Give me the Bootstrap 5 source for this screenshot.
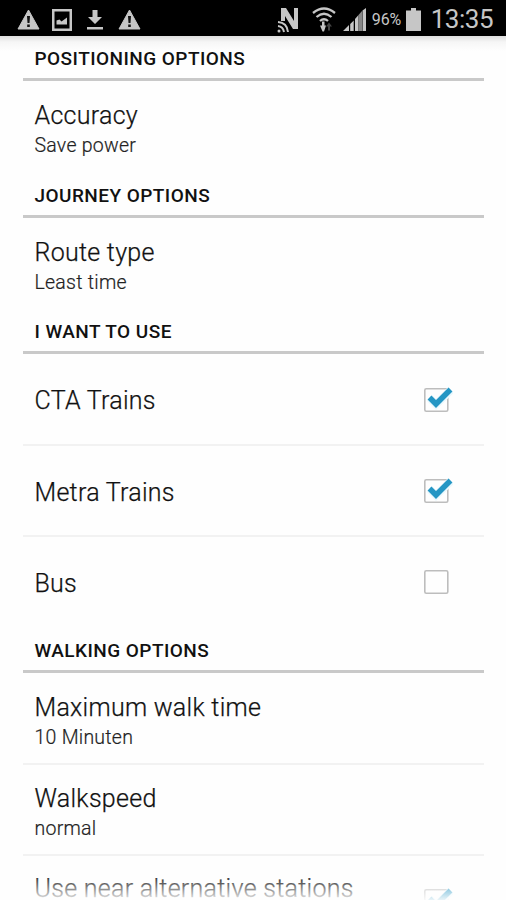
<!DOCTYPE html>
<html lang="en">
<head>
<meta charset="utf-8">
<meta name="viewport" content="width=device-width, initial-scale=1">
<title>Options</title>
<link href="https://cdn.jsdelivr.net/npm/bootstrap@5.3.0/dist/css/bootstrap.min.css" rel="stylesheet">
<style>
body { font-family: Roboto, sans-serif; background: #fefefe; color: #111; height: 900px; }
.screen { height: 900px; }
.statusbar { height: 36px; background: #000; color: #c6c6c6; padding: 3px 13px 0 17px; }
.statusbar svg { display: block; fill: #c6c6c6; }
.left-icons { gap: 12px; }
.left-icons svg:nth-child(n+3) { margin-left: 2px; }
.nfc-icon { margin-right: 13px; }
.signal-icon { margin-left: 7px; }
.battery-text { font-size: 16px; line-height: 33px; margin-left: 6px; width: 34px; letter-spacing: -.1px; }
.clock { font-size: 26px; line-height: 35px; margin-left: 10px; letter-spacing: -.5px; }
.options { height: 864px; padding: 0 22px 0 23px; background: linear-gradient(#dedede 0, #f6f6f6 6px, #fefefe 15px); }
.group-title { height: 46px; border-bottom: 3px solid #c9c9c9; padding: 11px 11.5px 0; font-size: 19px; line-height: 26px; font-weight: 500; letter-spacing: .45px; margin: 0; }
.group-title.first { height: 45px; padding-top: 10px; }
.option { height: 91px; padding: 0 31px 0 11.5px; }
.option + .option { border-top: 2px solid #f2f2f2; margin-top: -1px; height: 92px; }
.group-title + .option { height: 90.7px; }
.option-pair { padding-top: 6px; }
.option-name { font-size: 25px; line-height: 30px; font-weight: 300; letter-spacing: .28px; -webkit-text-stroke: .25px currentColor; }
.option-value { font-size: 19.5px; line-height: 24px; font-weight: 300; letter-spacing: .25px; margin-top: 3px; color: #222; -webkit-text-stroke: .2px currentColor; }
.option-name.single { padding-top: 3px; }
.tick-box { display: block; width: 30px; height: 30px; overflow: visible; }
.option + .last-option { padding-top: 18px; }
.last-option .tick-box { margin-top: 12px; }
.bottom-fade { height: 26px; background: linear-gradient(rgba(254,254,254,0), rgba(254,254,254,.9)); }
</style>
</head>
<body class="overflow-hidden">
<svg class="d-none">
  <symbol id="box" viewBox="0 0 30 30"><rect x="1.8" y="3.8" width="23" height="22.5" rx="1.5" fill="#fefefe" stroke="#bdbdbd" stroke-width="1.6"/></symbol>
  <symbol id="ticked" viewBox="0 0 30 30"><use href="#box"/><path d="M6.5 13l6.500 6.500L28 5" fill="none" stroke="#eaf8fd" stroke-width="8"/><path d="M6.500 12.500l6.500 6.500L27.500 4.500" fill="none" stroke="#2496c4" stroke-width="5.500"/></symbol>
  <symbol id="warning" viewBox="0 0 23 21"><path d="M11.5 1L22 20H1z" stroke="#c6c6c6" stroke-linejoin="round"/><path d="M10 7h3l-.5 7h-2zM10.2 15.5h2.6V18h-2.6z" fill="#111"/></symbol>
</svg>
<main class="screen position-relative overflow-hidden">
  <header class="statusbar d-flex align-items-center justify-content-between">
    <div class="left-icons d-flex align-items-center">
      <svg width="23" height="21"><use href="#warning"/></svg>
      <svg width="20" height="22" viewBox="0 0 20 22"><path fill-rule="evenodd" d="M0 0h20v22H0zM2.5 2.5v17h15v-17zM4.5 15.5v-4l3-1 2 2 5.500-4v7z"/></svg>
      <svg width="18" height="21" viewBox="0 0 18 21"><path d="M6.500 1h5v7H16l-7 7-7-7h4.500zM1 18h16v2.500H1z"/></svg>
      <svg width="23" height="21"><use href="#warning"/></svg>
    </div>
    <div class="d-flex align-items-center">
      <svg class="nfc-icon" width="22" height="26" viewBox="0 0 22 26"><path d="M4 1h5l8 13V1h4v21h-5L8 9v5H4z"/><g fill="none" stroke="#c6c6c6" stroke-width="2"><path d="M1 15q9 .5 10 10M1 19q5 .5 6 6"/></g><circle cx="2" cy="24" r="1.500"/></svg>
      <svg width="24" height="26" viewBox="0 0 24 26"><g fill="none" stroke="#c6c6c6" stroke-width="2.300"><path d="M1 6q11-9 22 0M4.500 10q7.500-6.500 15 0M8 14q4-3.500 8 0"/></g><path d="M10 14.500v4H8l2.500 6h1.500l2-6h-1.500v-4z"/><path d="M16 23.500v-4h-2l3-4 3 4h-2v4z" fill="#444"/></svg>
      <svg class="signal-icon" width="23" height="25" viewBox="0 0 23 25"><path d="M0 24l6-6v6zM7.200 24v-7l3.500-3.500V24zM12 24V12l3.500-4v16z"/><path d="M15.500 24V8L19 4v20z" fill="#888"/><path d="M19.500 24V3.500L23 1v23z"/></svg>
      <div class="battery-text">96%</div>
      <svg width="15" height="23" viewBox="0 0 15 23"><path d="M0 2.500h5V0h5v2.500h5V23H0z"/></svg>
      <div class="clock">13:35</div>
    </div>
  </header>

  <div class="options">
    <h2 class="group-title first">POSITIONING OPTIONS</h2>
    <div class="option option-pair d-flex flex-column justify-content-center"><div class="option-name">Accuracy</div><div class="option-value">Save power</div></div>
    <h2 class="group-title">JOURNEY OPTIONS</h2>
    <div class="option option-pair d-flex flex-column justify-content-center"><div class="option-name">Route type</div><div class="option-value">Least time</div></div>
    <h2 class="group-title">I WANT TO USE</h2>
    <div class="option d-flex align-items-center justify-content-between"><span class="option-name single">CTA Trains</span><svg class="tick-box"><use href="#ticked"/></svg></div>
    <div class="option d-flex align-items-center justify-content-between"><span class="option-name single">Metra Trains</span><svg class="tick-box"><use href="#ticked"/></svg></div>
    <div class="option d-flex align-items-center justify-content-between"><span class="option-name single">Bus</span><svg class="tick-box"><use href="#box"/></svg></div>
    <h2 class="group-title">WALKING OPTIONS</h2>
    <div class="option option-pair d-flex flex-column justify-content-center"><div class="option-name">Maximum walk time</div><div class="option-value">10 Minuten</div></div>
    <div class="option option-pair d-flex flex-column justify-content-center"><div class="option-name">Walkspeed</div><div class="option-value">normal</div></div>
    <div class="option last-option d-flex align-items-start justify-content-between"><span class="option-name">Use near alternative stations</span><svg class="tick-box"><use href="#ticked"/></svg></div>
  </div>
  <div class="bottom-fade position-absolute bottom-0 start-0 end-0"></div>
</main>
<script src="https://cdn.jsdelivr.net/npm/bootstrap@5.3.0/dist/js/bootstrap.bundle.min.js"></script>
</body>
</html>
